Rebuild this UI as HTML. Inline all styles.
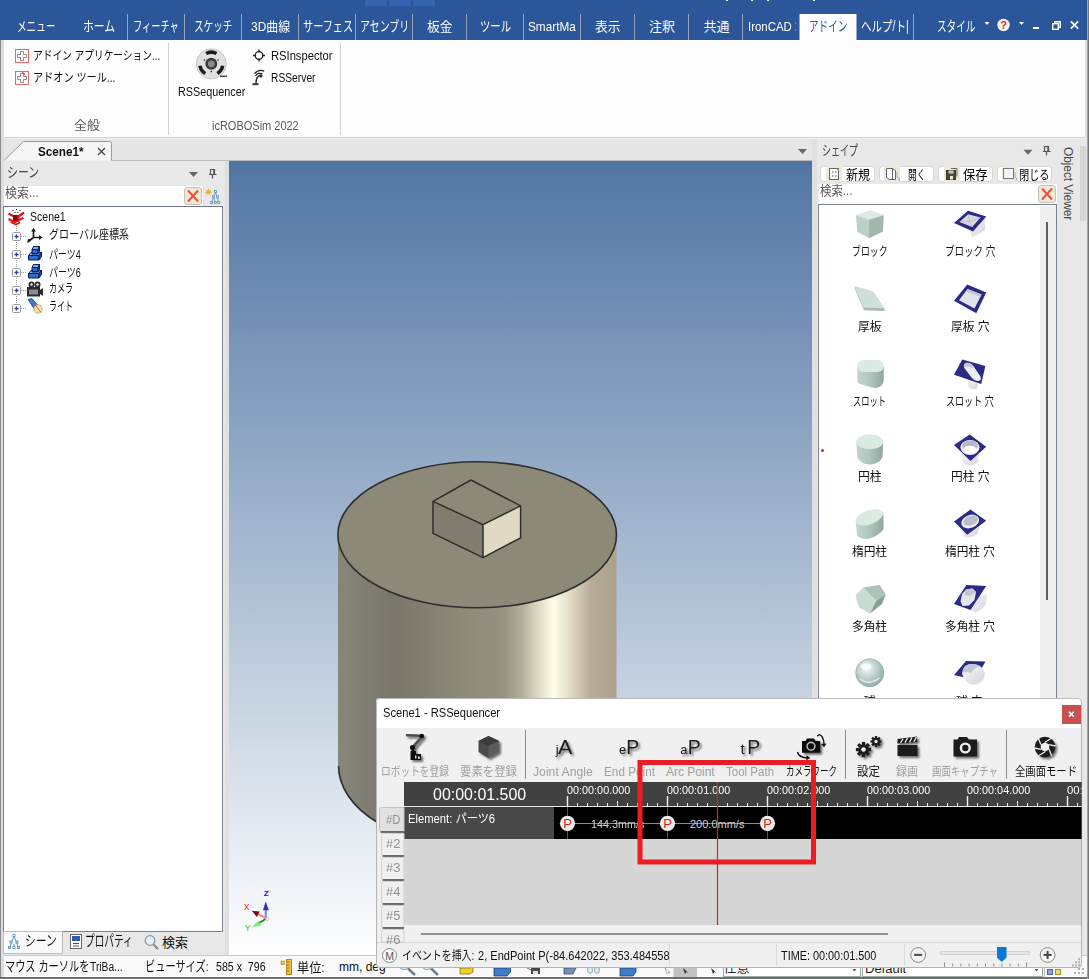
<!DOCTYPE html>
<html lang="ja">
<head>
<meta charset="utf-8">
<title>IronCAD - icROBOSim RSSequencer</title>
<style>
html,body{margin:0;padding:0;}
body{width:1089px;height:979px;position:relative;overflow:hidden;background:#f0f0f0;font-family:"Liberation Sans","Noto Sans CJK JP",sans-serif;}
.a{position:absolute;box-sizing:border-box;}
.t,.ts{position:absolute;white-space:pre;transform-origin:0 50%;display:block;}
svg{position:absolute;overflow:visible;}
</style>
</head>
<body>
<!-- ===== title bar + ribbon tabs ===== -->
<div class="a" style="left:0;top:0;width:1089px;height:40px;background:#2b5699;"></div>
<div class="a" style="left:365px;top:0;width:22px;height:6px;background:#3563b0;"></div>
<div class="a" style="left:389px;top:0;width:22px;height:6px;background:#3563b0;"></div>
<div class="a" style="left:413px;top:0;width:22px;height:6px;background:#3563b0;"></div>
<svg width="1089" height="40" style="left:0;top:0;">
  <g stroke="#9aa6b8" stroke-width="1">
    <path d="M127.5 14V40M184.5 14V40M241.5 14V40M298.5 14V40M355.5 14V40M412.5 14V40M466.5 14V40M523.5 14V40M580.5 14V40M634.5 14V40M688.5 14V40M742.5 14V40M913.5 14V40"/>
  </g>
  <!-- remnants of clipped title text -->
  <g fill="#ffffff"><rect x="726" y="0" width="2" height="1"/><rect x="751" y="0" width="2" height="1"/><rect x="767" y="0" width="2" height="1"/><rect x="813" y="0" width="2" height="1"/></g>
  <!-- active tab -->
  <rect x="799.5" y="14" width="57" height="26" fill="#fdfdfd"/>
  <!-- style dropdown arrows -->
  <path d="M984.5 22h5l-2.5 3z" fill="#ffffff"/>
  <path d="M1019 22h5l-2.5 3z" fill="#ffffff"/>
  <!-- help icon -->
  <circle cx="1003.5" cy="25" r="6.2" fill="#f4f4f4"/>
  <text x="1003.5" y="29.3" font-size="11" font-weight="bold" fill="#d8302a" text-anchor="middle" font-family="Liberation Sans, sans-serif">?</text>
  <!-- window buttons -->
  <rect x="1033" y="27" width="6" height="2" fill="#ffffff"/>
  <g fill="none" stroke="#ffffff" stroke-width="1.4"><rect x="1052.7" y="23.7" width="5.6" height="5.6"/><path d="M1054.7 23.7V21.7H1060.3V27.3H1058.3"/></g>
  <path d="M1070.8 21.3L1078.2 28.7M1078.2 21.3L1070.8 28.7" stroke="#ffffff" stroke-width="1.7"/>
  <g fill="#ffffff" opacity=".35"><rect x="795" y="22.5" width="1.3" height="1.5"/><rect x="795" y="29.5" width="1.3" height="1.5"/></g>
</svg>
<!-- ===== ribbon body ===== -->
<div class="a" style="left:0;top:40px;width:1089px;height:98px;background:#fdfdfd;border-bottom:1px solid #d4d4d4;"></div>
<div class="a" style="left:0;top:40px;width:4px;height:939px;background:#dedede;border-left:1px solid #8a8a8a;"></div>
<div class="a" style="left:168px;top:43px;width:1px;height:92px;background:#d2d2d2;"></div>
<div class="a" style="left:340px;top:43px;width:1px;height:92px;background:#d2d2d2;"></div>
<svg width="345" height="100" style="left:0;top:40px;">
  <!-- add-in icons -->
  <g fill="#ffffff" stroke="#e06a6a" stroke-width="1"><rect x="15.5" y="9.5" width="13" height="13"/><rect x="15.5" y="31.5" width="13" height="13"/></g>
  <g fill="#ffffff" stroke="#8c8c8c" stroke-width="1"><path d="M20.5 11.5h3v3h3v3h-3v3h-3v-3h-3v-3h3z"/><path d="M20.5 33.5h3v3h3v3h-3v3h-3v-3h-3v-3h3z"/></g>
  <path d="M22 32.5q3 0 3 3" stroke="#e04040" fill="none"/>
  <!-- RSSequencer reel -->
  <circle cx="211.3" cy="23.8" r="15" fill="#dfe2df" stroke="#c4c8c4" stroke-width="1"/>
  <g fill="none" stroke="#1c1c1c" stroke-width="3.6">
    <path d="M206.1 13.5A11.5 11.5 0 0 1 216.5 13.5"/>
    <path d="M222.6 25.8A11.5 11.5 0 0 1 217.4 33.6"/>
    <path d="M205.2 33.6A11.5 11.5 0 0 1 200 25.8"/>
  </g>
  <circle cx="211.3" cy="23.8" r="6" fill="#3c3c3c"/><circle cx="211.3" cy="23.8" r="3.4" fill="#8a8a8a"/>
  <g fill="#222"><circle cx="204.5" cy="20" r="0.8"/><circle cx="218" cy="20" r="0.8"/><circle cx="211.3" cy="31.6" r="0.8"/></g>
  <rect x="220" y="35.6" width="7" height="1.2" fill="#222"/>
  <!-- RSInspector crosshair -->
  <g fill="none" stroke="#222" stroke-width="1.3"><circle cx="259" cy="15.5" r="3.8"/><path d="M259 9.5v3M259 18.5v3M253 15.5h3M262 15.5h3"/></g>
  <!-- RSServer dish -->
  <g fill="none" stroke="#222" stroke-width="1.3"><path d="M256 43q0-7 5-8"/><path d="M255.5 36a5 5 0 0 1 7-2"/><path d="M254.6 33.6a8 8 0 0 1 9.6-2.4"/></g>
  <circle cx="261" cy="36" r="1.5" fill="#222"/><rect x="252.5" y="43" width="6" height="2.2" fill="#444"/>
</svg>
<!-- ===== document tab bar ===== -->
<div class="a" style="left:4px;top:139px;width:1085px;height:22px;background:#e6e6e6;"></div>
<svg width="1089" height="24" style="left:0;top:138px;">
  <path d="M4 22.5L23.5 3.5H109.5Q111.5 3.5 111.5 5.5V22.5" fill="#f6f6f6" stroke="#9a9a9a" stroke-width="1"/>
  <path d="M111.5 22.5H812" stroke="#bcbcbc" stroke-width="1" fill="none"/>
  <path d="M98 10L105 17M105 10L98 17" stroke="#444" stroke-width="1.3"/>
  <path d="M798 11h9l-4.5 5z" fill="#666"/>
</svg>

<!-- ===== 3D viewport ===== -->
<div class="a" style="left:225px;top:161px;width:4px;height:795px;background:#e0e0e0;"></div>
<div class="a" style="left:812px;top:139px;width:5px;height:817px;background:#e0e0e0;"></div>
<svg width="583" height="794" viewBox="229 161 583 794" style="left:229px;top:161px;overflow:hidden;">
  <defs>
    <linearGradient id="sky" x1="0" y1="0" x2="0" y2="1">
      <stop offset="0" stop-color="#5175a3"/><stop offset="1" stop-color="#ffffff"/>
    </linearGradient>
    <linearGradient id="cyl" x1="0" y1="0" x2="1" y2="0">
      <stop offset="0" stop-color="#86867a"/><stop offset="0.2" stop-color="#79766a"/><stop offset="0.45" stop-color="#8e8a78"/><stop offset="0.59" stop-color="#969080"/><stop offset="0.66" stop-color="#b3ae9b"/><stop offset="0.72" stop-color="#dedbc5"/><stop offset="0.775" stop-color="#fefee9"/><stop offset="0.83" stop-color="#e4dec7"/><stop offset="0.91" stop-color="#b6ab96"/><stop offset="1" stop-color="#ada18c"/>
    </linearGradient>
  </defs>
  <rect x="229" y="161" width="585" height="794" fill="url(#sky)"/>
  <!-- cylinder body -->
  <path d="M338 535V766A139.25 82 0 0 0 616.5 766V535Z" fill="url(#cyl)"/>
  <path d="M338.6 766A138.65 81.4 0 0 0 615.9 766" fill="none" stroke="#2e2e2e" stroke-width="1.6"/>
    <!-- top face -->
  <ellipse cx="477.2" cy="534.8" rx="139.3" ry="73" fill="#8c8978" stroke="#2e2e2e" stroke-width="1.6"/>
  <!-- small box -->
  <path d="M471 480L433 501.4L483 524.6L520.6 505.8Z" fill="#8c8978"/>
  <path d="M433 501.4V533.4L483 557.7V524.6Z" fill="#807c6f"/>
  <path d="M483 524.6V557.7L520.6 537.8V505.8Z" fill="#e0dac2"/>
  <path d="M471 480L433 501.4L483 524.6L520.6 505.8ZM433 501.4V533.4L483 557.7V524.6M483 557.7L520.6 537.8V505.8" fill="none" stroke="#2e2e2e" stroke-width="1.5" stroke-linejoin="round"/>
  <!-- triad -->
  <g font-family="Liberation Sans, sans-serif">
    <path d="M265.800 918V909.500" stroke="#8484f6" stroke-width="2.200"/><path d="M262.900 910.300L265.700 901.600L268.900 910.300Z" fill="#3434b4"/>
    <path d="M265.500 918L258 914" stroke="#f09090" stroke-width="2.200"/><path d="M251.800 910.800L259.800 911.600L256.800 917Z" fill="#7c1010"/>
    <path d="M266 918.800L259 923" stroke="#188418" stroke-width="1.600"/><path d="M252 927.200L258.200 920.800L261.800 925.500Z" fill="#78ec78"/>
    <circle cx="267" cy="919" r="1.500" fill="#f8f8f8" stroke="#9a9a9a" stroke-width="0.500"/>
    <text x="263.800" y="896" font-size="8" font-weight="bold" fill="#1010ff">Z</text>
    <text x="243.800" y="910" font-size="8.500" fill="#ff1818">X</text>
    <text x="244.700" y="931" font-size="8.500" fill="#10d810">Y</text>
  </g>
</svg>

<!-- ===== left scene browser ===== -->
<div class="a" style="left:4px;top:161px;width:221px;height:795px;background:#e8e8e8;"></div>
<div class="a" style="left:4px;top:186px;width:199px;height:20px;background:#ffffff;"></div>
<div class="a" style="left:3px;top:206px;width:220px;height:726px;background:#ffffff;border:1px solid #7a8290;border-top-color:#6e7686;"></div>
<svg width="226" height="800" viewBox="0 160 226 800" style="left:0;top:160px;">
  <!-- header arrow + pin -->
  <path d="M189 172h9l-4.5 5z" fill="#666"/>
  <g stroke="#555" fill="none" stroke-width="1.2"><path d="M210.5 174.5V169.5H214.5V174.5M209 174.5H216.5M212.5 174.5V178.5"/></g><rect x="213.3" y="169.5" width="1.4" height="5" fill="#555"/>
  <!-- clear button -->
  <rect x="184.5" y="187.5" width="17" height="17" rx="2.5" fill="#ece9d8" stroke="#c6c3b4"/>
  <path d="M188 190.5L198 201.5M198 190.5L188 201.5" stroke="#f0503c" stroke-width="2"/>
  <!-- tree filter icon -->
  <g fill="#e8b030"><path d="M208.5 188l.8 2.4 2.4-.9-1.4 2 2.2 1.2-2.5.2.4 2.5-1.9-1.8-1.8 1.800.4-2.500-2.500-.200 2.200-1.200-1.400-2 2.400.900z"/></g>
  <g stroke="#6a9ac0" stroke-width="0.9" fill="#e8f8b0"><path d="M215.500 192.500L213.500 197.500M215.500 192.500L217.500 197.500M213.500 197.500L211.500 202.500M213.500 197.500L215.500 202.500M217.500 197.500L218.500 202.500" fill="none"/><rect x="214.500" y="190.500" width="2" height="2"/><rect x="212.500" y="195.800" width="2" height="2"/><rect x="216.500" y="195.800" width="2" height="2"/><rect x="210.500" y="201.500" width="2" height="2"/><rect x="214.300" y="201.500" width="2" height="2"/><rect x="217.800" y="201.500" width="2" height="2"/></g>
  <!-- tree dotted lines -->
  <path d="M16.5 224V307" stroke="#9a9a9a" stroke-width="1" stroke-dasharray="1 1" fill="none"/>
  <g stroke="#9a9a9a" stroke-width="1" stroke-dasharray="1 1"><path d="M21 236.500H27M21 254.500H27M21 272.500H27M21 290.500H27M21 308.500H27"/></g>
  <!-- expanders -->
  <g fill="#fafafa" stroke="#9c9c9c" stroke-width="1"><rect x="12.500" y="232.5" width="8" height="8" rx="1"/><rect x="12.500" y="250.5" width="8" height="8" rx="1"/><rect x="12.500" y="268.5" width="8" height="8" rx="1"/><rect x="12.500" y="286.5" width="8" height="8" rx="1"/><rect x="12.500" y="304.5" width="8" height="8" rx="1"/></g>
  <g stroke="#2a3ca8" stroke-width="1.300"><path d="M14.500 236.5h4M16.500 234.5v4M14.500 254.5h4M16.500 252.5v4M14.500 272.5h4M16.500 270.5v4M14.500 290.5h4M16.500 288.5v4M14.500 308.5h4M16.500 306.5v4"/></g>
  <!-- Scene1 icon -->
  <g><g fill="#111"><rect x="12.500" y="210" width="1" height="1"/><rect x="16" y="209" width="1" height="1"/><rect x="19.500" y="210" width="1" height="1"/><rect x="14.500" y="212" width="1" height="1"/><rect x="17.500" y="212" width="1" height="1"/></g>
  <path d="M8.500 213.500L14 216.500M24 212.500L18.500 216.500" stroke="#e01414" stroke-width="2.200" fill="none"/>
  <path d="M13 215h6v6.500h-6z" fill="#8c0606"/><path d="M17.500 215.500h2v6h-2z" fill="#e02020"/>
  <path d="M8.500 219L15 222.200L23.500 217.800" stroke="#e01414" stroke-width="2" fill="none"/><path d="M10.500 222L16 224.500L20 222.500" stroke="#e01414" stroke-width="1.600" fill="none"/></g>
  <!-- global coordinate icon -->
  <g stroke="#1e1e1e" stroke-width="1.700" fill="none"><path d="M33.500 230V237.500H40M33.500 237.500L29 241"/></g><g fill="#1e1e1e"><path d="M31 231.500l2.500-3.500 2.500 3.500zM39 235l3.500 2.500-3.500 2.500zM28 239l3.200.3-2 2.900-2 .6z"/></g>
  <!-- part icons -->
  <g id="prt" stroke="#0c1c5c" stroke-width="1" stroke-linejoin="round">
    <path d="M33.500 246.500h6l-1.500 3h-6z" fill="#7ab2f0"/><path d="M32 249.500h6v4h-6z" fill="#2a6cd0"/><path d="M38 249.500l1.500-3v5l-1.500 2z" fill="#1c4ca0"/>
    <path d="M31 252.500h1v1.500h6.500l1-1.500h2l-2.500 3h-10.500z" fill="#7ab2f0"/><path d="M28.500 255.500h10.500v4.500h-10.500z" fill="#2a6cd0"/><path d="M39 255.500l2.500-3.500v4.500l-2.500 3.500z" fill="#1c4ca0"/>
  </g>
  <use href="#prt" y="18"/>
  <!-- camera icon -->
  <g fill="#2a2a2a"><circle cx="31.500" cy="284.500" r="3"/><circle cx="37.500" cy="284.500" r="3"/><rect x="27" y="287" width="13" height="9.500"/><path d="M40 290l3-2v8l-3-2z"/></g><g fill="#f0f0f0"><circle cx="31.500" cy="284.500" r="1.200"/><circle cx="37.500" cy="284.500" r="1.200"/><rect x="29" y="289.500" width="9" height="5" fill="#8c8ca0"/></g>
  <!-- light icon -->
  <g><path d="M28 299.500l4-1 6 7-4 3z" fill="#3a78c8" stroke="#1c3c78" stroke-width=".8"/><circle cx="38" cy="309" r="4.200" fill="#f2e6b0" stroke="#b0a070" stroke-width=".8"/><path d="M35 304.500l6 8" stroke="#e06030" stroke-width="1"/></g>
  <!-- bottom tabs -->
  <path d="M3.500 931.500V953.500H62.500V931.500" fill="#fafafa" stroke="#bcbcbc"/>
  <g stroke="#6a9ac0" stroke-width="1" fill="#e8f8b0"><path d="M14 936L11 944M14 936L17 944M11 944L9.500 948M17 944L18.500 948M14 944V948" fill="none"/><rect x="13" y="934.500" width="2" height="2"/><rect x="10" y="941" width="2" height="2"/><rect x="16" y="941" width="2" height="2"/><rect x="8.500" y="946.500" width="2" height="2"/><rect x="13" y="946.500" width="2" height="2"/><rect x="17.500" y="946.500" width="2" height="2"/></g>
  <g><rect x="70.500" y="934.500" width="11" height="14" fill="#fff" stroke="#6a6a6a"/><rect x="72" y="936" width="8" height="5" fill="#2a5cb0"/><path d="M73 943.500h6M73 946h6" stroke="#555" stroke-width="1"/></g>
  <g><circle cx="150" cy="940.500" r="4.800" fill="#e4f0f8" stroke="#8a9aa8" stroke-width="1.300"/><path d="M153.500 944.500l4.500 4.500" stroke="#8a8a8a" stroke-width="2.200"/></g>
</svg>

<!-- ===== right shape catalog ===== -->
<div class="a" style="left:817px;top:139px;width:272px;height:817px;background:#e8e8e8;"></div>
<div class="a" style="left:819px;top:184px;width:238px;height:20px;background:#ffffff;"></div>
<div class="a" style="left:818px;top:204px;width:239px;height:560px;background:#ffffff;border:1px solid #7a8290;"></div>
<div class="a" style="left:1040px;top:206px;width:16px;height:560px;background:#f0f0f0;"></div>
<div class="a" style="left:1046px;top:222px;width:2px;height:378px;background:#606060;"></div>
<div class="a" style="left:821px;top:448.500px;width:3px;height:3px;border-radius:2px;background:#e81c1c;"></div>
<svg width="271" height="80" viewBox="818 138 271 80" style="left:818px;top:138px;">
  <path d="M1023.500 149.800h9l-4.500 5z" fill="#666"/>
  <g stroke="#555" fill="none" stroke-width="1.200"><path d="M1044.500 151.500V146.500H1048.500V151.500M1043 151.500H1050.500M1046.500 151.500V155.500"/></g><rect x="1047.300" y="146.500" width="1.400" height="5" fill="#555"/>
  <!-- toolbar buttons -->
  <g fill="#ffffff" stroke="#d4d4d4"><rect x="820.500" y="166.500" width="54" height="15" rx="3"/><rect x="879.500" y="166.500" width="54" height="15" rx="3"/><rect x="938.500" y="166.500" width="54" height="15" rx="3"/><rect x="997.500" y="166.500" width="54" height="15" rx="3"/></g>
  <g><rect x="826" y="166" width="16" height="16" fill="#ece9d8"/><rect x="829.500" y="168.500" width="9" height="11" fill="#fff" stroke="#666"/><path d="M832 172h1.500M835 172h1.500M832 176h1.500M835 176h1.500" stroke="#889" stroke-width="1.500"/><path d="M836 168.500h3v3z" fill="#888"/></g>
  <g><rect x="884" y="166" width="16" height="16" fill="#ece9d8"/><path d="M886.500 168.500h6l3 2v9h-6l-3-2z" fill="#fff" stroke="#667"/><path d="M892.500 168.500v11" stroke="#667" fill="none"/><path d="M897 172v5l3 2-1.500 2" stroke="#99a" fill="none" stroke-width=".8"/></g>
  <g><rect x="944" y="166" width="16" height="16" fill="#ece9d8"/><rect x="946.500" y="170.500" width="9" height="9" fill="#4a4a3a" stroke="#333"/><rect x="948.500" y="170.500" width="5" height="3" fill="#c8c8b8"/><rect x="950" y="176" width="3" height="3.500" fill="#e8e8d8"/><path d="M951 168.500h6v8" fill="none" stroke="#667"/></g>
  <g><rect x="1002" y="166" width="16" height="16" fill="#ece9d8"/><rect x="1003.500" y="168.500" width="10" height="10" fill="#f4f4f4" stroke="#778"/><path d="M1015 172v5l2 2-1.500 2" stroke="#99a" fill="none" stroke-width=".8"/></g>
  <!-- clear button -->
  <rect x="1038.500" y="185.500" width="17" height="17" rx="2.500" fill="#ece9d8" stroke="#c6c3b4"/>
  <path d="M1042 188.500L1052 199.500M1052 188.500L1042 199.500" stroke="#f0503c" stroke-width="2"/>
</svg>
<!-- Object Viewer side tab -->
<div class="a" style="left:1057px;top:139px;width:32px;height:817px;background:#e8e8e8;"></div>
<div class="a" style="left:1080px;top:146px;width:6px;height:75px;background:#d5d5d5;"></div>
<div class="a" style="left:1060px;top:147px;width:16px;height:76px;"><span style="position:absolute;left:16px;top:0;transform-origin:0 0;transform:rotate(90deg);font-size:12px;line-height:16px;color:#484848;white-space:nowrap;letter-spacing:-0.1px;">Object Viewer</span></div>
<!-- shape icons -->
<svg width="140" height="490" viewBox="850 205 140 490" style="left:850px;top:205px;">
  <defs>
    <linearGradient id="gs" x1="0" y1="0" x2="1" y2="0"><stop offset="0" stop-color="#c2d6ce"/><stop offset=".5" stop-color="#aec4bc"/><stop offset="1" stop-color="#90a6a0"/></linearGradient>
    <radialGradient id="sp" cx=".4" cy=".35" r=".7"><stop offset="0" stop-color="#f4fcfa"/><stop offset=".5" stop-color="#bcd0cc"/><stop offset="1" stop-color="#8ea6a2"/></radialGradient>
    <linearGradient id="wh" x1="0" y1="0" x2="1" y2="1"><stop offset="0" stop-color="#f8f8fa"/><stop offset="1" stop-color="#d4d4dc"/></linearGradient>
  </defs>
  <!-- block -->
  <path d="M870.500 210L856 215.200L868.800 219.800L883.700 215.200Z" fill="#dceae4"/><path d="M856 215.200L857.300 232L869 238.300L868.800 219.800Z" fill="#bcd0c8"/><path d="M868.800 219.800L869 238.300L883 231.400L883.700 215.200Z" fill="#a2b6ae"/>
  <!-- block hole -->
  <path d="M968 224L985 218V230L972 237.500Z" fill="url(#wh)"/><path d="M968 210.700L986.200 216.500L973 231.400L954 223Z" fill="#2b2b86"/><path d="M968.200 214.300L980.500 217.600L972.200 227L959.500 222Z" fill="#d8dae2"/><path d="M968.200 214.300L969.500 221.500L972.200 227M959.500 222L969.500 221.500L980.500 217.600" stroke="#b4b6c4" stroke-width=".7" fill="none"/>
  <!-- plate -->
  <path d="M854.800 286L873.300 291.400L884.500 308.300L863.900 307.400Z" fill="#cfe0d8"/><path d="M863.900 307.400L884.500 308.300V311L864 310.200Z" fill="#a4b8b0"/><path d="M854.800 286L863.900 307.400L864 310.200L854.600 288.500Z" fill="#b4c8c0"/>
  <!-- plate hole -->
  <path d="M967.200 284.600L986.200 292.600L976.300 313.200L954 300.800Z" fill="#2b2b86"/><path d="M967.500 289L981.500 294.500L974.500 308.500L959 300.300Z" fill="#e2e4ea"/><path d="M967.500 289L981.500 294.500L980.500 297L967 292Z" fill="#c4c6d2"/>
  <!-- slot -->
  <path d="M857.300 366V381Q857.500 383 860 384L874 388Q877 388.500 880 386.500Q883.500 384 883.700 380V366Z" fill="url(#gs)"/><rect x="857.300" y="360" width="26.400" height="12" rx="6" fill="#dceae4"/>
  <!-- slot hole -->
  <path d="M967 378L979 381L977 388.500Q972 390 968.500 387.500Z" fill="url(#wh)"/><path d="M962.200 359.600L985.400 366L981.200 383.900L954 374.800Z" fill="#2b2b86"/><path d="M964 367.500Q963 363 967.500 362.800Q971 362.800 974 367L980.500 376.500Q982 381 977.500 381Q973.500 380.500 971.500 377.500Z" fill="#eceef2"/><path d="M964 367.500Q963 363 967.500 362.800Q971 362.800 974 367L972 368Q969 365.500 966.500 366.500Z" fill="#c0c2d0"/>
  <!-- cylinder -->
  <path d="M856.200 441.700L857.500 458Q862 465 870 464.500Q880 463.500 882.500 457L883.200 441.700Z" fill="url(#gs)"/><ellipse cx="869.700" cy="441.700" rx="13.500" ry="7.500" fill="#dceae4"/>
  <!-- cylinder hole -->
  <path d="M961 452L979 452L977.500 463Q970 467.500 963 463.500Z" fill="url(#wh)"/><path d="M969.700 434.600L986.200 446.700L970.500 461L954 445Z" fill="#2b2b86"/><ellipse cx="970" cy="447.500" rx="9.500" ry="7.500" fill="#f2f2f6"/><ellipse cx="970" cy="445.800" rx="7.800" ry="5.200" fill="#b6b8c8"/><ellipse cx="970" cy="449.500" rx="6.500" ry="3.800" fill="#fafafc"/>
  <!-- elliptic cylinder -->
  <path d="M855.800 522L857 535.500Q862 540 870 538.500Q880 535 883.500 529L883.300 513Z" fill="url(#gs)"/><ellipse cx="869.300" cy="517.400" rx="14.500" ry="7" transform="rotate(-20 869.300 517.400)" fill="#dceae4"/>
  <!-- elliptic hole -->
  <path d="M961 527L980 524L978 533Q972 539 964 537Z" fill="url(#wh)"/><path d="M970.500 509.600L986.200 520.700L967.200 534.700L954 521.500Z" fill="#2b2b86"/><ellipse cx="970.200" cy="521.500" rx="9.200" ry="6.500" transform="rotate(-20 970.200 521.500)" fill="#f0f0f4"/><ellipse cx="970.600" cy="520.600" rx="7.600" ry="4.800" transform="rotate(-20 970.600 520.600)" fill="#bcbecc"/>
  <!-- polygon prism -->
  <path d="M863 587.600L879.600 585L885.700 594.200L876.300 600.800Z" fill="#aec2ba"/><path d="M855.500 595.500L863 587.600L876.300 600.800L870 613.500L859 607.500Z" fill="#c8dcd4"/><path d="M876.300 600.800L885.700 594.200L882 604L870 613.500Z" fill="#8a9e98"/>
  <!-- polygon hole -->
  <path d="M975 598L986 594Q988 602 983 608L976 612.500L968 609Z" fill="url(#wh)"/><path d="M966.400 585.100L986.200 586L970.500 610L954 604Z" fill="#2b2b86"/><path d="M966 589.500L972.500 588.500L976 592L974.500 600L969 605.500L962.500 606L960.500 601.500L962 594Z" fill="#e4e6ec"/><path d="M966 589.500L972.500 588.500L976 592L970 596L964 595Z" fill="#c4c6d2"/>
  <!-- sphere -->
  <circle cx="869.700" cy="672.700" r="14.300" fill="url(#sp)"/><circle cx="869.700" cy="672.700" r="13.800" fill="none" stroke="#9ab0ac" stroke-width="1" opacity=".7"/><ellipse cx="866" cy="666.500" rx="5.500" ry="3.200" fill="#ffffff" opacity=".75"/><path d="M860 679Q869 686 879.500 678" stroke="#f0faf8" stroke-width="1.500" fill="none" opacity=".8"/>
  <!-- sphere hole -->
  <path d="M966 661L985.500 661.500L975 680L954 675Z" fill="#2b2b86"/><path d="M965 666Q972 662 980 666Q988 672 983 680Q978 686 970 684Q963 680 962 673Z" fill="url(#wh)"/><path d="M965 666Q972 662 980 666Q974 668 971 673Q966 671 962 673Q962.500 668.500 965 666Z" fill="#c4c6d4"/>
</svg>

<!-- ===== main status bar ===== -->
<div class="a" style="left:4px;top:955px;width:1085px;height:22px;background:#f9f9f9;border-top:1px solid #cacaca;"></div>
<div class="a" style="left:0;top:977px;width:1089px;height:2px;background:#6e6e6e;"></div>
<svg width="1089" height="24" viewBox="0 955 1089 24" style="left:0;top:955px;">
  <!-- ruler icon -->
  <rect x="286.500" y="959.500" width="5" height="15" fill="#f0c040" stroke="#b08820"/><path d="M287 962h2.500M287 965h2.500M287 968h2.500M287 971h2.500" stroke="#806010" stroke-width=".8"/><rect x="281" y="961" width="3.500" height="3.500" fill="#e8c050" stroke="#a08020" stroke-width=".6"/>
  <!-- partially hidden toolbar under sequencer window -->
  <g>
    <g stroke="#6c7c8c" stroke-width="2.400" fill="none"><path d="M408 968.500l7 6.500"/><path d="M431 968.500l7 6.500"/></g><g stroke="#9ab0c4" stroke-width="1.200" fill="#dcecf6"><circle cx="404" cy="964.500" r="5.200"/><circle cx="427" cy="964.500" r="5.200"/></g>
    <path d="M460 968h10l3 -1v5l-3 2h-10z" fill="#f0d030" stroke="#907010" stroke-width=".8"/>
    <path d="M494 968h13l3.500 -1v5l-3.500 4h-13z" fill="#3c7cc8" stroke="#1c3c78" stroke-width=".8"/>
    <path d="M531 968h9v6h-9z" fill="#4a4a4a"/><path d="M533 971h5v3h-5z" fill="#e0e0e0"/><path d="M527 968l4 2" stroke="#667" stroke-width="1"/>
    <path d="M564 968h12l-3 6h-9z" fill="#7c8cb8" stroke="#3c4c78" stroke-width=".8"/>
    <ellipse cx="590" cy="970" rx="2.500" ry="3.500" fill="#d8ecf4" stroke="#7a9ab0" stroke-width=".8"/><ellipse cx="597" cy="970" rx="2.500" ry="3.500" fill="#d8ecf4" stroke="#7a9ab0" stroke-width=".8"/>
    <path d="M620 968h13l3 -1v5l-3 4h-13z" fill="#3c7cc8" stroke="#1c3c78" stroke-width=".8"/>
    <path d="M665 968l2 6 1.500-2 2 1z" fill="#fff" stroke="#889" stroke-width=".6"/>
    <rect x="673.500" y="967" width="23.500" height="10" fill="#c2c2c2"/><path d="M683 968l2 6 1.500-2 2 1z" fill="#333"/>
    <path d="M711 968l2 6 1.500-2 2 1z" fill="#333"/>
    <rect x="723.500" y="960.500" width="137" height="16" fill="#fff" stroke="#9aa"/>
    <path d="M852.500 969h4l-2 2.500z" fill="#555"/>
    <rect x="862.500" y="960.500" width="180" height="16" fill="#fff" stroke="#9aa"/>
    <path d="M1034.500 969h4l-2 2.500z" fill="#555"/>
    <path d="M1044.500 960v17" stroke="#c0c0c0"/>
    <rect x="1047.500" y="969.500" width="5" height="5" fill="#88a4d8" stroke="#4a64a0"/><rect x="1055.500" y="969.500" width="5" height="5" fill="#f0e060" stroke="#a09030"/>
  </g>
  <g fill="#b0b0b0"><rect x="1078" y="968" width="2" height="2"/><rect x="1082" y="968" width="2" height="2"/><rect x="1078" y="972" width="2" height="2"/><rect x="1082" y="972" width="2" height="2"/><rect x="1074" y="972" width="2" height="2"/></g>
</svg>
<span class="ts" style="left:723.500px;top:959px;font-size:13px;line-height:17px;color:#1e1e1e;">任意</span>
<span class="ts" style="left:865px;top:960px;font-size:13px;line-height:17px;color:#1e1e1e;">Default</span>

<span class="t" style="left:17px;top:16.6px;font-size:14px;line-height:18px;color:#ffffff;transform:scaleX(0.6875);">メニュー</span>
<span class="t" style="left:83px;top:16.6px;font-size:14px;line-height:18px;color:#ffffff;transform:scaleX(0.7738);">ホーム</span>
<span class="t" style="left:133px;top:16.6px;font-size:14px;line-height:18px;color:#ffffff;transform:scaleX(0.6571);">フィーチャ</span>
<span class="t" style="left:194px;top:16.6px;font-size:14px;line-height:18px;color:#ffffff;transform:scaleX(0.6875);">スケッチ</span>
<span class="t" style="left:250.5px;top:17.8px;font-size:13px;line-height:17px;color:#ffffff;transform:scaleX(0.9186);">3D曲線</span>
<span class="t" style="left:302.5px;top:16.6px;font-size:14px;line-height:18px;color:#ffffff;transform:scaleX(0.7246);">サーフェス</span>
<span class="t" style="left:360px;top:16.6px;font-size:14px;line-height:18px;color:#ffffff;transform:scaleX(0.7101);">アセンブリ</span>
<span class="t" style="left:427px;top:17.8px;font-size:13px;line-height:17px;color:#ffffff;transform:scaleX(0.9808);">板金</span>
<span class="t" style="left:479.5px;top:16.6px;font-size:14px;line-height:18px;color:#ffffff;transform:scaleX(0.7381);">ツール</span>
<span class="t" style="left:528px;top:17.8px;font-size:13px;line-height:17px;color:#ffffff;transform:scaleX(0.9057);">SmartMa</span>
<span class="t" style="left:595px;top:17.8px;font-size:13px;line-height:17px;color:#ffffff;transform:scaleX(0.9808);">表示</span>
<span class="t" style="left:649px;top:17.8px;font-size:13px;line-height:17px;color:#ffffff;transform:scaleX(1.0000);">注釈</span>
<span class="t" style="left:703.5px;top:17.8px;font-size:13px;line-height:17px;color:#ffffff;transform:scaleX(1.0000);">共通</span>
<span class="t" style="left:747.5px;top:17.8px;font-size:13px;line-height:17px;color:#ffffff;transform:scaleX(0.8800);">IronCAD</span>
<span class="t" style="left:861px;top:16.6px;font-size:14px;line-height:18px;color:#ffffff;transform:scaleX(0.7500);">ヘルプ/ト|</span>
<span class="t" style="left:936.5px;top:16.6px;font-size:14px;line-height:18px;color:#ffffff;transform:scaleX(0.6875);">スタイル</span>
<span class="t" style="left:809px;top:16.6px;font-size:14px;line-height:18px;color:#2b579a;transform:scaleX(0.6875);">アドイン</span>
<span class="t" style="left:33px;top:47.5px;font-size:12px;line-height:16px;color:#101010;transform:scaleX(0.8089);">アドイン アプリケーション...</span>
<span class="t" style="left:33px;top:70px;font-size:12px;line-height:16px;color:#101010;transform:scaleX(0.8454);">アドオン ツール...</span>
<span class="t" style="left:74px;top:117.5px;font-size:12px;line-height:16px;color:#5a5a5a;transform:scaleX(1.0833);">全般</span>
<span class="t" style="left:177.5px;top:83.5px;font-size:12px;line-height:16px;color:#101010;transform:scaleX(0.9000);">RSSequencer</span>
<span class="t" style="left:270.5px;top:47.5px;font-size:12px;line-height:16px;color:#101010;transform:scaleX(0.9318);">RSInspector</span>
<span class="t" style="left:270.5px;top:70px;font-size:12px;line-height:16px;color:#101010;transform:scaleX(0.8558);">RSServer</span>
<span class="t" style="left:211.5px;top:117.5px;font-size:12px;line-height:16px;color:#5a5a5a;transform:scaleX(0.9158);">icROBOSim 2022</span>
<span class="t" style="left:38px;top:142.5px;font-size:13px;line-height:17px;color:#101010;transform:scaleX(0.9020);font-weight:bold;">Scene1*</span>
<span class="t" style="left:7px;top:163.3px;font-size:14px;line-height:18px;color:#444;transform:scaleX(0.7805);">シーン</span>
<span class="t" style="left:4.5px;top:184px;font-size:13px;line-height:17px;color:#5a5a5a;transform:scaleX(0.9189);">検索...</span>
<span class="t" style="left:29.5px;top:209px;font-size:12px;line-height:16px;color:#101010;transform:scaleX(0.8780);">Scene1</span>
<span class="t" style="left:49px;top:227px;font-size:12px;line-height:16px;color:#101010;transform:scaleX(0.8333);">グローバル座標系</span>
<span class="t" style="left:49px;top:246.5px;font-size:12px;line-height:16px;color:#101010;transform:scaleX(0.7500);">パーツ4</span>
<span class="t" style="left:49px;top:264.5px;font-size:12px;line-height:16px;color:#101010;transform:scaleX(0.7500);">パーツ6</span>
<span class="t" style="left:49px;top:281px;font-size:12px;line-height:16px;color:#101010;transform:scaleX(0.6667);">カメラ</span>
<span class="t" style="left:49px;top:299px;font-size:12px;line-height:16px;color:#101010;transform:scaleX(0.6667);">ライト</span>
<span class="t" style="left:25px;top:932.35px;font-size:14.5px;line-height:18.5px;color:#101010;transform:scaleX(0.7442);">シーン</span>
<span class="t" style="left:85px;top:932.35px;font-size:14.5px;line-height:18.5px;color:#101010;transform:scaleX(0.6667);">プロパティ</span>
<span class="t" style="left:162px;top:933.5px;font-size:13px;line-height:17px;color:#101010;transform:scaleX(1.0000);">検索</span>
<span class="t" style="left:5px;top:957.85px;font-size:13.5px;line-height:17.5px;color:#101010;transform:scaleX(0.7545);">マウス カーソルを</span>
<span class="t" style="left:89.5px;top:959px;font-size:12px;line-height:16px;color:#101010;transform:scaleX(0.8553);">TriBa...</span>
<span class="t" style="left:145px;top:957.85px;font-size:13.5px;line-height:17.5px;color:#101010;transform:scaleX(0.7560);">ビューサイズ:</span>
<span class="t" style="left:216px;top:959px;font-size:12px;line-height:16px;color:#101010;transform:scaleX(0.8839);">585 x  796</span>
<span class="t" style="left:297px;top:958.5px;font-size:13px;line-height:17px;color:#101010;transform:scaleX(0.9333);">単位:</span>
<span class="t" style="left:339px;top:959px;font-size:12px;line-height:16px;color:#101010;transform:scaleX(1.0000);">mm, deg</span>
<span class="t" style="left:822px;top:140.6px;font-size:14px;line-height:18px;color:#444;transform:scaleX(0.6429);">シェイプ</span>
<span class="t" style="left:845.5px;top:165.5px;font-size:13px;line-height:17px;color:#000;transform:scaleX(0.9231);">新規</span>
<span class="t" style="left:907.5px;top:165.5px;font-size:13px;line-height:17px;color:#000;transform:scaleX(0.6731);">開く</span>
<span class="t" style="left:963px;top:165.5px;font-size:13px;line-height:17px;color:#000;transform:scaleX(0.9423);">保存</span>
<span class="t" style="left:1019px;top:165.5px;font-size:13px;line-height:17px;color:#000;transform:scaleX(0.7821);">閉じる</span>
<span class="t" style="left:820px;top:182.3px;font-size:13px;line-height:17px;color:#5a5a5a;transform:scaleX(0.8784);">検索...</span>
<span class="t" style="left:851.75px;top:243.5px;font-size:12px;line-height:16px;color:#101010;transform:scaleX(0.7396);">ブロック</span>
<span class="t" style="left:944.5px;top:243.5px;font-size:12px;line-height:16px;color:#101010;transform:scaleX(0.7937);">ブロック 穴</span>
<span class="t" style="left:857.75px;top:318.5px;font-size:12px;line-height:16px;color:#101010;transform:scaleX(0.9792);">厚板</span>
<span class="t" style="left:950.5px;top:318.5px;font-size:12px;line-height:16px;color:#101010;transform:scaleX(0.9744);">厚板 穴</span>
<span class="t" style="left:853px;top:393.5px;font-size:12px;line-height:16px;color:#101010;transform:scaleX(0.6875);">スロット</span>
<span class="t" style="left:945.75px;top:393.5px;font-size:12px;line-height:16px;color:#101010;transform:scaleX(0.7540);">スロット 穴</span>
<span class="t" style="left:857.75px;top:468.5px;font-size:12px;line-height:16px;color:#101010;transform:scaleX(0.9792);">円柱</span>
<span class="t" style="left:950.5px;top:468.5px;font-size:12px;line-height:16px;color:#101010;transform:scaleX(0.9744);">円柱 穴</span>
<span class="t" style="left:852px;top:543.5px;font-size:12px;line-height:16px;color:#101010;transform:scaleX(0.9722);">楕円柱</span>
<span class="t" style="left:944.75px;top:543.5px;font-size:12px;line-height:16px;color:#101010;transform:scaleX(0.9706);">楕円柱 穴</span>
<span class="t" style="left:852px;top:618.5px;font-size:12px;line-height:16px;color:#101010;transform:scaleX(0.9722);">多角柱</span>
<span class="t" style="left:944.75px;top:618.5px;font-size:12px;line-height:16px;color:#101010;transform:scaleX(0.9706);">多角柱 穴</span>
<span class="t" style="left:863.5px;top:693.5px;font-size:12px;line-height:16px;color:#101010;transform:scaleX(1.0000);">球</span>
<span class="t" style="left:956.25px;top:693.5px;font-size:12px;line-height:16px;color:#101010;transform:scaleX(0.9815);">球 穴</span>
<!-- ===== RSSequencer floating window ===== -->
<div class="a" style="left:376px;top:697.500px;width:706.300px;height:270.500px;background:#f0f0f0;border-radius:4px;overflow:hidden;">
  <div class="a" style="left:0;top:0;width:707px;height:30.500px;background:#ffffff;"></div>
  <div class="a" style="left:686px;top:7.500px;width:18.800px;height:18.500px;background:#c75050;"></div>
  <!-- timeline header -->
  <div class="a" style="left:28px;top:84.500px;width:679px;height:25px;background:#414141;"></div>
  <!-- element row -->
  <div class="a" style="left:28px;top:109.500px;width:150px;height:32px;background:#484848;"></div>
  <div class="a" style="left:178px;top:109.500px;width:529px;height:32px;background:#000000;"></div>
  <!-- empty rows -->
  <div class="a" style="left:28px;top:141.500px;width:679px;height:86px;background:#d6d6d6;"></div>
  <!-- status strip -->
  <div class="a" style="left:0;top:244.500px;width:707px;height:26.500px;background:#f0f0f0;border-top:1px solid #d4d4d4;"></div>
</div>
<svg width="714" height="280" viewBox="372 694 714 280" style="left:372px;top:694px;">
  <defs><filter id="ds" x="-30%" y="-30%" width="170%" height="170%"><feGaussianBlur in="SourceAlpha" stdDeviation="1"/><feOffset dx="1.500" dy="2"/><feComponentTransfer><feFuncA type="linear" slope=".55"/></feComponentTransfer><feMerge><feMergeNode/><feMergeNode in="SourceGraphic"/></feMerge></filter></defs>
  <!-- close x -->
  <path d="M1069 711.800l4.800 4.800M1073.800 711.800l-4.800 4.800" stroke="#fff" stroke-width="1.600"/>
  <!-- toolbar separators -->
  <path d="M525.500 730V779M845.500 730V779M1006.500 730V779" stroke="#8c8c8c" stroke-width="1"/>
  <!-- robot icon -->
  <g filter="url(#ds)"><path d="M407 735.200L421.500 735.800" fill="none" stroke="#4a4a4a" stroke-width="2.600" stroke-linecap="round"/><path d="M421.800 737L413 747" fill="none" stroke="#555" stroke-width="3" stroke-linecap="round"/><circle cx="421.800" cy="736" r="2.300" fill="#111"/><circle cx="412.600" cy="747.500" r="2.600" fill="#111"/><path d="M410.500 751h5.500v3h5v6h-10.500z" fill="#111"/><path d="M413 750v3" stroke="#111" stroke-width="3"/><path d="M415 755.500h1.500v3h-1.500zM418 756.500h1.800v2.500h-1.800z" fill="#d8d8d8"/></g>
  <!-- cube icon -->
  <g filter="url(#ds)"><path d="M488.500 736L499 741V752L488.500 758L478.500 752V741Z" fill="#4a4a4a"/><path d="M488.500 736L499 741L488.500 746L478.500 741Z" fill="#3a3a3a"/><path d="M488.500 746V758L499 752V741Z" fill="#5c5c5c"/></g>
  <!-- text icons -->
  <g filter="url(#ds)" fill="#1c1c1c" font-family="Liberation Sans, sans-serif">
    <text x="555.700" y="754" font-size="13">j</text><text transform="translate(558 754) scale(1.02 1)" font-size="21">A</text>
    <text x="619" y="754" font-size="13">e</text><text transform="translate(626.300 754) scale(.92 1)" font-size="21">P</text>
    <text x="680.300" y="754" font-size="13">a</text><text transform="translate(687.700 754) scale(.92 1)" font-size="21">P</text>
    <text x="740.600" y="754" font-size="14.500">t</text><text transform="translate(747.300 754) scale(.92 1)" font-size="21">P</text>
  </g>
  <!-- camera work icon -->
  <g filter="url(#ds)"><path d="M802 741h3.500l1.500-2.500h7l1.500 2.500h4.700v11.700h-18.200z" fill="#0c0c0c"/><circle cx="811" cy="746.300" r="3.900" fill="none" stroke="#b4b4b4" stroke-width="1.600"/></g>
  <g fill="none" stroke="#111" stroke-width="1.400"><path d="M817.300 736.200q2.500-3 4.800 0.500q2 3.500 2 8.300"/><path d="M797.500 752q1 5.500 10.500 6"/></g><path d="M821.300 744l2.800 3.200 2.400-3.800z" fill="#111"/><path d="M806.500 755.300l3.800 2.800-4 2.200z" fill="#111"/>
  <!-- gears -->
  <g filter="url(#ds)" fill="#1c1c1c">
    <g transform="translate(863.500 749.500)"><circle r="5.200"/><g id="tg"><rect x="-1.600" y="-7.600" width="3.200" height="15.200"/><rect x="-1.600" y="-7.600" width="3.200" height="15.200" transform="rotate(45)"/><rect x="-1.600" y="-7.600" width="3.200" height="15.200" transform="rotate(90)"/><rect x="-1.600" y="-7.600" width="3.200" height="15.200" transform="rotate(135)"/></g><circle r="2.300" fill="#f0f0f0"/></g>
    <g transform="translate(876 741.500) scale(.72)"><circle r="5.200"/><use href="#tg"/><circle r="2.300" fill="#f0f0f0"/></g>
  </g>
  <!-- clapper -->
  <g filter="url(#ds)"><rect x="897.500" y="745" width="20" height="11" fill="#1c1c1c"/><path d="M897.500 739L917 736.500V742L897.500 743.500Z" fill="#1c1c1c"/><path d="M900.500 743l2.500-4.200M905 742.600l2.500-4.600M909.500 742.200l2.500-4.800M914 741.800l2.300-4.800" stroke="#f0f0f0" stroke-width="1.300"/></g>
  <!-- screenshot camera -->
  <g filter="url(#ds)"><path d="M953.500 739.500h4l1.500-2.500h8l1.500 2.500h8.500v17h-23.500z" fill="#1c1c1c"/><circle cx="965.300" cy="748" r="5.600" fill="#f0f0f0"/><circle cx="965.300" cy="748" r="3.200" fill="#1c1c1c"/></g>
  <!-- aperture -->
  <g filter="url(#ds)"><circle cx="1045" cy="747" r="10.300" fill="#1c1c1c"/><path d="M1045 742.200l4.200 2.400v4.800l-4.200 2.400-4.200-2.400v-4.800z" fill="#f0f0f0"/><g stroke="#f0f0f0" stroke-width="1.300"><path d="M1045 742.200L1051 738.500M1049.200 744.600L1055.200 746M1049.200 749.400L1051.500 755.500M1045 751.800L1039 755.500M1040.800 749.400L1034.800 748M1040.800 744.600L1038.500 738.500"/></g></g>
  <!-- ruler ticks -->
  <path d="M404 806.500H1082.500" stroke="#e6e6e6" stroke-width="1"/>
  <g stroke="#f0f0f0" stroke-width="1">
    <path d="M567.500 796V807M667.500 796V807M767.500 796V807M867.500 796V807M967.500 796V807M1067.500 796V807" stroke-width="1.400"/>
    <path d="M577.500 803v4m10-4v4m10-4v4m10-4v4m10-6v6m10-4v4m10-4v4m10-4v4m10-4v4M677.500 803v4m10-4v4m10-4v4m10-4v4m10-6v6m10-4v4m10-4v4m10-4v4m10-4v4M777.500 803v4m10-4v4m10-4v4m10-4v4m10-6v6m10-4v4m10-4v4m10-4v4m10-4v4M877.500 803v4m10-4v4m10-4v4m10-4v4m10-6v6m10-4v4m10-4v4m10-4v4m10-4v4M977.500 803v4m10-4v4m10-4v4m10-4v4m10-6v6m10-4v4m10-4v4m10-4v4m10-4v4M1077.500 803v4"/>
  </g>
  <!-- event track -->
  <path d="M567 823.500H767" stroke="#8a8a8a" stroke-width="1"/>
  <path d="M567.500 807V839M667.500 807V839M767.500 807V839" stroke="#e01818" stroke-width="1"/>
  <g fill="#ececec"><circle cx="567.500" cy="823.300" r="7.600"/><circle cx="667.500" cy="823.300" r="7.600"/><circle cx="767.500" cy="823.300" r="7.600"/></g>
  <g fill="#e81818" font-size="13" font-family="Liberation Sans, sans-serif" text-anchor="middle"><text x="567.500" y="828">P</text><text x="667.500" y="828">P</text><text x="767.500" y="828">P</text></g>
  <!-- row tabs -->
  <g fill="#e1e1e1" stroke="#c4c4c4" stroke-width="1"><path d="M404 807.500H381.500Q379.500 807.500 379.500 809.500V829.500Q379.500 831.500 381.500 831.500H404Z"/></g>
  <g fill="#f0f0f0" stroke="#d0d0d0" stroke-width="1">
    <path d="M404 833.500H383.500Q381.500 833.500 381.500 835.500V853.500Q381.500 855.500 383.500 855.500H404Z"/>
    <path d="M404 857.500H383.500Q381.500 857.500 381.500 859.500V877.500Q381.500 879.500 383.500 879.500H404Z"/>
    <path d="M404 881.500H383.500Q381.500 881.500 381.500 883.500V901.500Q381.500 903.500 383.500 903.500H404Z"/>
    <path d="M404 905.500H383.500Q381.500 905.500 381.500 907.500V925.500Q381.500 927.500 383.500 927.500H404Z"/>
    <path d="M404 929.500H383.500Q381.500 929.500 381.500 931.500V942H404Z"/>
  </g>
  <g stroke="#484848" stroke-width="1.600" fill="none"><path d="M380.500 832H404M382.500 856H404M382.500 880H404M382.500 904H404M382.500 928H404"/></g>
  <!-- horizontal scroll indicator -->
  <path d="M421 934H888" stroke="#707070" stroke-width="1.600"/>
  <!-- status items -->
  <circle cx="389.500" cy="955.500" r="7" fill="#fafafa" stroke="#8a8a8a" stroke-width="1"/>
  <text x="389.500" y="959.500" font-size="10.500" fill="#555" text-anchor="middle" font-family="Liberation Sans, sans-serif">M</text>
  <path d="M669.500 944V966M776.500 944V966M904.500 944V966" stroke="#dadada" stroke-width="1"/>
  <circle cx="918.200" cy="955" r="7.400" fill="#f4f4f4" stroke="#8a8a8a" stroke-width="1"/><rect x="914.200" y="953.800" width="8" height="2.200" fill="#555"/>
  <circle cx="1047.600" cy="955" r="7.400" fill="#f4f4f4" stroke="#8a8a8a" stroke-width="1"/><rect x="1043.600" y="953.900" width="8" height="2" fill="#444"/><rect x="1046.600" y="950.900" width="2" height="8" fill="#444"/>
  <rect x="940.500" y="951.500" width="89" height="3" fill="#e6e6e6" stroke="#d2d2d2"/>
  <path d="M997 947h9.500v10.500l-4.750 4.500l-4.750-4.500z" fill="#0a78d7"/>
  <path d="M944.500 962.500v4.500m8.200-3.500v3m8.200-3v3m8.200-3v3m8.200-3v3m8.200-3v3m8.200-3v3m8.200-3v3m8.200-3v3m8.200-3v3m8.200-4v4.500" stroke="#909090" stroke-width="1"/>
  <g fill="#b0b0b0"><rect x="1078" y="958.200" width="2" height="2"/><rect x="1075" y="961.300" width="2" height="2"/><rect x="1078" y="961.300" width="2" height="2"/><rect x="1072" y="964.400" width="2" height="2"/><rect x="1075" y="964.400" width="2" height="2"/><rect x="1078" y="964.400" width="2" height="2"/></g>
</svg>

<span class="t" style="left:383.3px;top:705px;font-size:12px;line-height:16px;color:#101010;transform:scaleX(0.9286);">Scene1 - RSSequencer</span>
<span class="t" style="left:381px;top:764.3px;font-size:12px;line-height:16px;color:#a0a0a0;transform:scaleX(0.8095);">ロボットを登録</span>
<span class="t" style="left:460px;top:764.3px;font-size:12px;line-height:16px;color:#a0a0a0;transform:scaleX(0.9500);">要素を登録</span>
<span class="t" style="left:533px;top:763.5px;font-size:12px;line-height:16px;color:#a0a0a0;transform:scaleX(1.0169);">Joint Angle</span>
<span class="t" style="left:604px;top:763.5px;font-size:12px;line-height:16px;color:#a0a0a0;transform:scaleX(0.9808);">End Point</span>
<span class="t" style="left:666px;top:763.5px;font-size:12px;line-height:16px;color:#a0a0a0;transform:scaleX(1.0000);">Arc Point</span>
<span class="t" style="left:726px;top:763.5px;font-size:12px;line-height:16px;color:#a0a0a0;transform:scaleX(0.9600);">Tool Path</span>
<span class="t" style="left:786px;top:764.3px;font-size:12px;line-height:16px;color:#101010;transform:scaleX(0.7083);">カメラワーク</span>
<span class="t" style="left:857px;top:764.3px;font-size:12px;line-height:16px;color:#101010;transform:scaleX(0.9583);">設定</span>
<span class="t" style="left:896px;top:764.3px;font-size:12px;line-height:16px;color:#a0a0a0;transform:scaleX(0.9167);">録画</span>
<span class="t" style="left:932px;top:764.3px;font-size:12px;line-height:16px;color:#a0a0a0;transform:scaleX(0.7857);">画面キャプチャ</span>
<span class="t" style="left:1015px;top:764.3px;font-size:12px;line-height:16px;color:#101010;transform:scaleX(0.8611);">全画面モード</span>
<span class="t" style="left:433px;top:783.8px;font-size:17px;line-height:21px;color:#ffffff;transform:scaleX(0.9394);">00:00:01.500</span>
<span class="t" style="left:567px;top:782.5px;font-size:11px;line-height:15px;color:#ffffff;transform:scaleX(0.9844);">00:00:00.000</span>
<span class="t" style="left:667px;top:782.5px;font-size:11px;line-height:15px;color:#ffffff;transform:scaleX(0.9844);">00:00:01.000</span>
<span class="t" style="left:767px;top:782.5px;font-size:11px;line-height:15px;color:#ffffff;transform:scaleX(0.9844);">00:00:02.000</span>
<span class="t" style="left:867px;top:782.5px;font-size:11px;line-height:15px;color:#ffffff;transform:scaleX(0.9844);">00:00:03.000</span>
<span class="t" style="left:967px;top:782.5px;font-size:11px;line-height:15px;color:#ffffff;transform:scaleX(0.9844);">00:00:04.000</span>
<span class="t" style="left:1067px;top:782.5px;font-size:11px;line-height:15px;color:#ffffff;transform:scaleX(1.0333);overflow:hidden;">00:</span>
<span class="t" style="left:408px;top:811px;font-size:12px;line-height:16px;color:#ffffff;transform:scaleX(0.9355);">Element: パーツ6</span>
<span class="t" style="left:591px;top:816.5px;font-size:11px;line-height:15px;color:#d0d0d0;transform:scaleX(0.9815);">144.3mm/s</span>
<span class="t" style="left:690px;top:816.5px;font-size:11px;line-height:15px;color:#d0d0d0;transform:scaleX(1.0000);">200.0mm/s</span>
<span class="t" style="left:386px;top:812px;font-size:12px;line-height:16px;color:#909090;transform:scaleX(0.9333);">#D</span>
<span class="t" style="left:386px;top:836px;font-size:12px;line-height:16px;color:#909090;transform:scaleX(1.0769);">#2</span>
<span class="t" style="left:386px;top:860px;font-size:12px;line-height:16px;color:#909090;transform:scaleX(1.0769);">#3</span>
<span class="t" style="left:386px;top:884px;font-size:12px;line-height:16px;color:#909090;transform:scaleX(1.0769);">#4</span>
<span class="t" style="left:386px;top:908px;font-size:12px;line-height:16px;color:#909090;transform:scaleX(1.0769);">#5</span>
<span class="t" style="left:386px;top:932px;font-size:12px;line-height:16px;color:#909090;transform:scaleX(1.0769);">#6</span>
<span class="t" style="left:402px;top:948px;font-size:12px;line-height:16px;color:#101010;transform:scaleX(0.8276);">イベントを挿入:</span>
<span class="t" style="left:477.5px;top:948px;font-size:12px;line-height:16px;color:#101010;transform:scaleX(0.9207);">2, EndPoint P(-84.642022, 353.484558</span>
<span class="t" style="left:781px;top:948px;font-size:12px;line-height:16px;color:#101010;transform:scaleX(0.9048);">TIME: 00:00:01.500</span>
<!-- ===== overlays drawn above all labels ===== -->
<svg width="190" height="170" viewBox="634 758 190 170" style="left:634px;top:758px;">
  <path d="M717.500 782V925" stroke="#e81c24" stroke-width="1.200"/>
  <rect x="640" y="762.500" width="173.500" height="99.500" fill="none" stroke="#ed1c24" stroke-width="5"/>
</svg>
<div class="a" style="left:376px;top:697.500px;width:706.300px;height:270.500px;border:1px solid rgba(120,120,120,.5);border-radius:4px;"></div>
<div class="a" style="left:1085px;top:40px;width:3px;height:98px;background:#e0e0e0;"></div>
<div class="a" style="left:1087px;top:0;width:1px;height:979px;background:#a4a4a4;"></div>
<div class="a" style="left:1088px;top:0;width:1px;height:979px;background:#747474;"></div>


<!--LABELS-->
</body>
</html>
